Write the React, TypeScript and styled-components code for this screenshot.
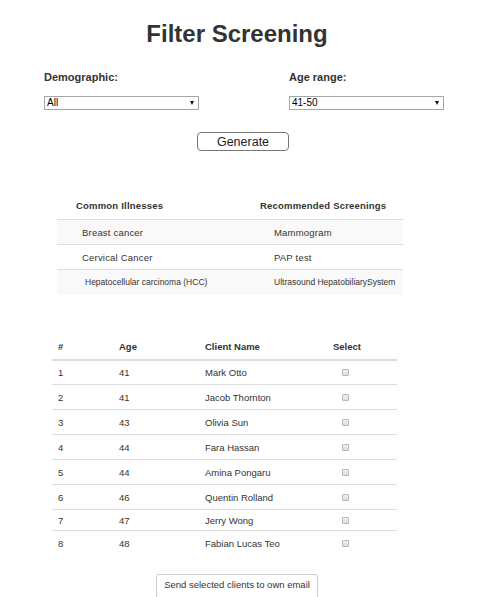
import React from 'react';
import styled, { createGlobalStyle } from 'styled-components';

const GlobalStyle = createGlobalStyle`
    body {
        margin: 0;
        background: #fff;
        font-family: "Liberation Sans", Arial, sans-serif;
        color: #333;
    }
`;

const illnesses = [
    { name: 'Breast cancer', screening: 'Mammogram', small: false },
    { name: 'Cervical Cancer', screening: 'PAP test', small: false },
    { name: 'Hepatocellular carcinoma (HCC)', screening: 'Ultrasound HepatobiliarySystem', small: true },
];

const clients = [
    { id: 1, age: 41, name: 'Mark Otto', h: 25 },
    { id: 2, age: 41, name: 'Jacob Thornton', h: 25 },
    { id: 3, age: 43, name: 'Olivia Sun', h: 25 },
    { id: 4, age: 44, name: 'Fara Hassan', h: 25 },
    { id: 5, age: 44, name: 'Amina Pongaru', h: 25 },
    { id: 6, age: 46, name: 'Quentin Rolland', h: 25 },
    { id: 7, age: 47, name: 'Jerry Wong', h: 21 },
    { id: 8, age: 48, name: 'Fabian Lucas Teo', h: 25 },
];

const App: React.FC = () => {
    return (
        <>
            <GlobalStyle />
            <Page>
                <Title>Filter Screening</Title>

                <FilterGrid>
                    <Label>Demographic:</Label>
                    <Label>Age range:</Label>
                    <SelectWrap>
                        <Select defaultValue="All">
                            <option>All</option>
                        </Select>
                    </SelectWrap>
                    <SelectWrap>
                        <Select defaultValue="41-50">
                            <option>41-50</option>
                        </Select>
                    </SelectWrap>
                </FilterGrid>

                <ButtonRow $shift={4}>
                    <GenerateButton>Generate</GenerateButton>
                </ButtonRow>

                <IllnessTable>
                    <colgroup>
                        <col style={{ width: 190 }} />
                        <col style={{ width: 156 }} />
                    </colgroup>
                    <thead>
                        <tr>
                            <IllnessHead $pad={19}>Common Illnesses</IllnessHead>
                            <IllnessHead $pad={13}>Recommended Screenings</IllnessHead>
                        </tr>
                    </thead>
                    <tbody>
                        {illnesses.map((row, i) => (
                            <IllnessRow key={row.name} $striped={i % 2 === 0}>
                                <IllnessCell $pad={row.small ? 28 : 25} $small={row.small}>{row.name}</IllnessCell>
                                <IllnessCell $pad={27} $small={row.small}>{row.screening}</IllnessCell>
                            </IllnessRow>
                        ))}
                    </tbody>
                </IllnessTable>

                <ClientTable>
                    <colgroup>
                        <col style={{ width: 61 }} />
                        <col style={{ width: 86 }} />
                        <col style={{ width: 128 }} />
                        <col style={{ width: 70 }} />
                    </colgroup>
                    <thead>
                        <tr>
                            <ClientHead>#</ClientHead>
                            <ClientHead>Age</ClientHead>
                            <ClientHead>Client Name</ClientHead>
                            <ClientHead>Select</ClientHead>
                        </tr>
                    </thead>
                    <tbody>
                        {clients.map((c, i) => (
                            <ClientRow key={c.id} $first={i === 0} style={{ height: c.h }}>
                                <ClientCell>{c.id}</ClientCell>
                                <ClientCell>{c.age}</ClientCell>
                                <ClientCell>{c.name}</ClientCell>
                                <ClientCell>
                                    <Check type="checkbox" />
                                </ClientCell>
                            </ClientRow>
                        ))}
                    </tbody>
                </ClientTable>

                <ButtonRow $shift={16}>
                    <SendButton>Send selected clients to own email</SendButton>
                </ButtonRow>
            </Page>
        </>
    );
};

export default App;

const Page = styled.div`
    width: 490px;
    padding-top: 20px;
`;

const Title = styled.h1`
    margin: 0;
    padding-right: 16px;
    font-size: 24px;
    line-height: 28px;
    font-weight: bold;
    text-align: center;
    color: #333;
`;

const FilterGrid = styled.div`
    display: grid;
    grid-template-columns: 155px 155px;
    column-gap: 90px;
    row-gap: 12px;
    margin: 23px 0 0 44px;
`;

const Label = styled.div`
    font-size: 11px;
    line-height: 13px;
    font-weight: bold;
    color: #333;
`;

const SelectWrap = styled.div`
    position: relative;
    width: 155px;

    &::after {
        content: '';
        position: absolute;
        right: 5px;
        top: 5px;
        border-left: 2.5px solid transparent;
        border-right: 2.5px solid transparent;
        border-top: 4px solid #111;
        pointer-events: none;
    }
`;

const Select = styled.select`
    appearance: none;
    -webkit-appearance: none;
    display: block;
    box-sizing: border-box;
    width: 155px;
    height: 14px;
    margin: 0;
    padding: 0 2px;
    border: 1px solid #a6a6a6;
    border-radius: 0;
    background: #fff;
    font-family: "Liberation Sans", Arial, sans-serif;
    font-size: 10px;
    line-height: 12px;
    color: #000;
`;

const ButtonRow = styled.div<{ $shift: number }>`
    display: flex;
    justify-content: center;
    padding-right: ${p => p.$shift}px;
`;

const GenerateButton = styled.button`
    box-sizing: border-box;
    width: 92px;
    height: 19px;
    margin-top: 22px;
    padding: 0;
    border: 1px solid #767676;
    border-radius: 4px;
    background: #fff;
    font-family: "Liberation Sans", Arial, sans-serif;
    font-size: 12.5px;
    color: #222;
`;

const IllnessTable = styled.table`
    width: 346px;
    margin: 44px 0 0 57px;
    border-collapse: collapse;
    table-layout: fixed;
`;

const IllnessHead = styled.th<{ $pad: number }>`
    height: 21px;
    padding: 0 0 3px ${p => p.$pad}px;
    text-align: left;
    font-size: 9.5px;
    font-weight: bold;
    letter-spacing: 0.2px;
    color: #333;
    border-bottom: 1px solid #ddd;
    white-space: nowrap;
`;

const IllnessRow = styled.tr<{ $striped: boolean }>`
    height: 25px;
    background: ${p => (p.$striped ? '#f9f9f9' : '#fff')};
    border-top: 1px solid #ddd;

    &:first-child {
        border-top: none;
    }
`;

const IllnessCell = styled.td<{ $pad: number; $small: boolean }>`
    padding: 0 0 0 ${p => p.$pad}px;
    font-size: ${p => (p.$small ? '8.5px' : '9.5px')};
    letter-spacing: ${p => (p.$small ? '0' : '0.2px')};
    color: #333;
    white-space: nowrap;
`;

const ClientTable = styled.table`
    width: 345px;
    margin: 39px 0 0 52px;
    border-collapse: collapse;
    table-layout: fixed;
`;

const ClientHead = styled.th`
    height: 25px;
    padding: 0 6px;
    text-align: left;
    font-size: 9.5px;
    font-weight: bold;
    color: #333;
    border-bottom: 2px solid #ddd;
`;

const ClientRow = styled.tr<{ $first: boolean }>`
    border-top: ${p => (p.$first ? 'none' : '1px solid #ddd')};
`;

const ClientCell = styled.td`
    padding: 0 6px;
    font-size: 9.5px;
    color: #333;
    white-space: nowrap;
`;

const Check = styled.input`
    appearance: none;
    -webkit-appearance: none;
    display: block;
    box-sizing: border-box;
    width: 7px;
    height: 7px;
    margin: 0 0 0 9px;
    border: 1px solid #b8b8b8;
    border-radius: 1px;
    background: linear-gradient(#f2f2f2, #dcdcdc);
`;

const SendButton = styled.button`
    box-sizing: border-box;
    margin-top: 18px;
    padding: 4px 7px 8px;
    border: 1px solid #ccc;
    border-radius: 3px;
    background: #fff;
    font-family: "Liberation Sans", Arial, sans-serif;
    font-size: 9.5px;
    color: #333;
`;
